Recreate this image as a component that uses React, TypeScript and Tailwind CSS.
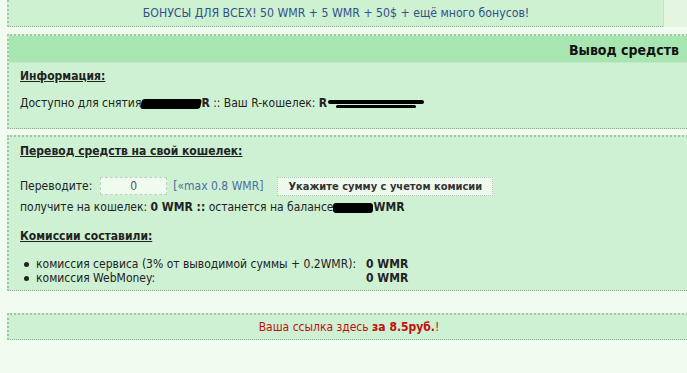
import React from "react";

const font = { fontFamily: '"DejaVu Sans Condensed", "DejaVu Sans", Tahoma, sans-serif' };

function Blot({ w, h = 9, className = "" }: { w: number; h?: number; className?: string }) {
	return (
		<span
			className={"inline-block bg-black rounded-[3px] align-middle " + className}
			style={{ width: w, height: h }}
		/>
	);
}

export default function App() {
	return (
		<div className="w-[687px] h-[373px] overflow-hidden bg-[#effcef] text-[12px] leading-[15px] text-[#222]" style={font}>
			{/* top banner */}
			<div className="flex h-[27px]">
				<div className="ml-[7px] w-[656px] bg-[#cdf1d1] border-l-2 border-[#a6c8a6] border-b border-b-[#8fae8f] border-dotted flex items-center justify-center text-[#34508a] text-[12.2px]">
					БОНУСЫ ДЛЯ ВСЕХ! 50 WMR + 5 WMR + 50$ + ещё много бонусов!
				</div>
				<div className="flex-1 bg-[#e2f6e2] border-l border-[#c9dfc9]" />
			</div>

			{/* main panel: header + info */}
			<div className="mt-[7px] ml-[7px] w-[700px] border-l-2 border-t-2 border-[#a3c6a3] border-b border-b-[#8fae8f] border-dotted bg-[#cdf1d2]">
				<div className="h-[27px] bg-[#a8e6b1] border-b border-[#c4e8c8] flex items-center justify-end pr-[28px] pt-[2px] font-bold text-[14px] text-[#111]">
					Вывод средств
				</div>
				<div className="pl-[11px] pt-[6px] pb-[17px]">
					<div className="font-bold underline">Информация:</div>
					<div className="mt-[12px] flex items-center whitespace-pre">
						<span>Доступно для снятия</span>
						<Blot w={60} h={10} className="-skew-x-12" />
						<span className="font-bold">R</span>
						<span> :: Ваш R-кошелек: </span>
						<span className="font-bold">R</span>
						<span className="flex flex-col gap-[1px] ml-[1px]">
							<Blot w={96} h={4} />
							<Blot w={80} h={3} className="ml-[8px]" />
						</span>
					</div>
				</div>
			</div>

			{/* transfer section */}
			<div className="mt-[6px] ml-[7px] w-[700px] border-l-2 border-t-2 border-[#a3c6a3] border-b border-b-[#8fae8f] border-dotted bg-[#cdf1d2] pl-[11px] pt-[7px] pb-[5px]">
				<div className="font-bold underline">Перевод средств на свой кошелек:</div>
				<div className="mt-[17px] h-[20px] flex items-center">
					<span>Переводите:</span>
					<div className="ml-[8px] w-[67px] h-[18px] bg-[#eefbee] border border-dashed border-[#bcd3bc] flex items-center justify-center text-[#555]">
						0
					</div>
					<span className="ml-[6px] text-[#4d6e9e]">[«max 0.8 WMR]</span>
					<div className="ml-[14px] w-[216px] h-[19px] bg-[#eef9ee] border border-dotted border-[#b5c9b5] flex items-center justify-center font-bold text-[11px] text-[#333]">
						Укажите сумму с учетом комисии
					</div>
				</div>
				<div className="mt-[4px] flex items-center whitespace-pre">
					<span>получите на кошелек: </span>
					<span className="font-bold">0 WMR ::</span>
					<span> останется на балансе</span>
					<Blot w={40} h={10} />
					<span className="font-bold">WMR</span>
				</div>
				<div className="mt-[14px] font-bold underline">Комиссии составили:</div>
				<div className="mt-[13px] grid grid-cols-[auto_auto] w-max leading-[14px]">
					<div className="flex items-center">
						<span className="w-[5px] h-[5px] rounded-full bg-[#222] ml-[4px] mr-[7px]" />
						комиссия сервиса (3% от выводимой суммы + 0.2WMR):
					</div>
					<div className="font-bold pl-[10px]">0 WMR</div>
					<div className="flex items-center">
						<span className="w-[5px] h-[5px] rounded-full bg-[#222] ml-[4px] mr-[7px]" />
						комиссия WebMoney:
					</div>
					<div className="font-bold pl-[10px]">0 WMR</div>
				</div>
			</div>

			{/* footer ad */}
			<div className="mt-[22px] ml-[7px] w-[700px] h-[27px] border-l-2 border-t-2 border-[#a3c6a3] border-b border-b-[#8fae8f] border-dotted bg-[#cdf1d2] flex items-center">
				<div className="w-[680px] text-center text-[#c40d0d]">
					Ваша ссылка здесь <span className="font-bold">за 8.5руб.</span>!
				</div>
			</div>
		</div>
	);
}
